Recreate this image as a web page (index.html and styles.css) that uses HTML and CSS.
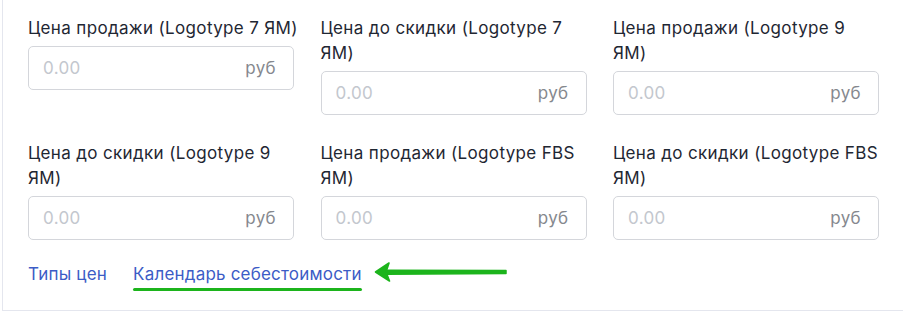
FILE: index.html
```html
<!DOCTYPE html>
<html>
<head>
    <meta charset="utf-8">
    <link rel="stylesheet" href="styles.css">
</head>
<body>
<div class="panel">
    <div class="price-grid">
        <div class="field">
            <label class="field-label">Цена продажи (Logotype 7 ЯМ)</label>
            <div class="price-input">
                <input type="text" placeholder="0.00">
                <span class="unit">руб</span>
            </div>
        </div>
        <div class="field">
            <label class="field-label">Цена до скидки (Logotype 7<br>ЯМ)</label>
            <div class="price-input">
                <input type="text" placeholder="0.00">
                <span class="unit">руб</span>
            </div>
        </div>
        <div class="field">
            <label class="field-label">Цена продажи (Logotype 9<br>ЯМ)</label>
            <div class="price-input">
                <input type="text" placeholder="0.00">
                <span class="unit">руб</span>
            </div>
        </div>
        <div class="field">
            <label class="field-label">Цена до скидки (Logotype 9<br>ЯМ)</label>
            <div class="price-input">
                <input type="text" placeholder="0.00">
                <span class="unit">руб</span>
            </div>
        </div>
        <div class="field">
            <label class="field-label">Цена продажи (Logotype FBS<br>ЯМ)</label>
            <div class="price-input">
                <input type="text" placeholder="0.00">
                <span class="unit">руб</span>
            </div>
        </div>
        <div class="field">
            <label class="field-label">Цена до скидки (Logotype FBS<br>ЯМ)</label>
            <div class="price-input">
                <input type="text" placeholder="0.00">
                <span class="unit">руб</span>
            </div>
        </div>
    </div>

    <div class="links">
        <a href="#" class="link">Типы цен</a>
        <a href="#" class="link marked">Календарь себестоимости</a>
        <!-- annotation arrow -->
        <svg class="arrow" width="136" height="22" viewBox="0 0 136 22">
            <path d="M13 9.2 L133 9.6 L133 12.4 L13 13.2 Z" fill="#1cb41c" stroke="#1cb41c" stroke-width="1.5" stroke-linejoin="round"/>
            <path d="M2.5 11 L16 2 L13 11 L16.5 20 Z" fill="#1cb41c" stroke="#1cb41c" stroke-width="1.6" stroke-linejoin="round"/>
        </svg>
    </div>
</div>
</body>
</html>
```

FILE: styles.css
```css
body {
    margin: 0;
    background: #fff;
    font-family: Inter, "Noto Sans", sans-serif;
    color: #222a36;
}

.panel {
    margin-left: 2px;
    border-left: 1px solid #e4e6ee;
    border-bottom: 1px solid #e4e6ee;
    padding: 15.6px 24px 23px 25px;
}

.price-grid {
    display: grid;
    grid-template-columns: repeat(3, 266px);
    column-gap: 26.5px;
    row-gap: 26px;
    align-items: start;
}

.field {
    display: flex;
    flex-direction: column;
}

.field-label {
    font-size: 17px;
    line-height: 25px;
    letter-spacing: 0.35px;
    color: #1f2733;
    white-space: nowrap;
}

.price-input {
    margin-top: 5px;
    height: 44px;
    box-sizing: border-box;
    border: 1px solid #d4d6db;
    border-radius: 5px;
    display: flex;
    align-items: center;
    padding: 0 17px 0 14px;
}

.price-input input {
    flex: 1;
    min-width: 0;
    border: 0;
    outline: 0;
    padding: 0;
    background: transparent;
    font-family: Inter, "Noto Sans", sans-serif;
    font-size: 17px;
    letter-spacing: 0.35px;
    color: #222a36;
}

.price-input input::placeholder {
    color: #c3c7ce;
}

.unit {
    font-size: 17px;
    letter-spacing: 0.35px;
    color: #85888e;
}

.links {
    margin-top: 22.4px;
    display: flex;
    align-items: center;
    gap: 26px;
}

.link {
    font-size: 17px;
    line-height: 25px;
    letter-spacing: 0.2px;
    color: #3c5cc6;
    text-decoration: none;
}

.marked {
    position: relative;
}

.marked::after {
    content: "";
    position: absolute;
    left: 0;
    right: 0;
    bottom: -4px;
    height: 3px;
    border-radius: 2px;
    background: #1cb41c;
}

.arrow {
    position: absolute;
    left: 373px;
    top: 261px;
}
```
